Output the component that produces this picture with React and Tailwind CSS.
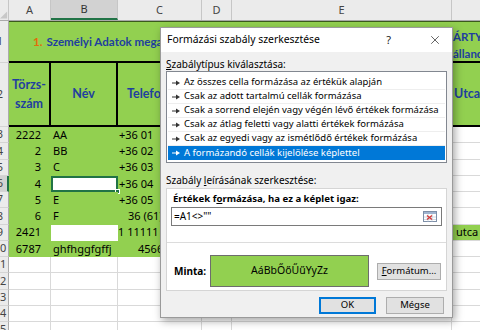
import React from "react";
import clsx from "clsx";
import { X } from "lucide-react";

const GREEN = "bg-[#92d050]";
const BLUE = "text-[#1f3f9f]";

const rows = [
  { n: 3, a: "2222", b: "AA", c: "+36 01", cl: "pl-[1px]" },
  { n: 4, a: "2", b: "BB", c: "+36 02", cl: "pl-[1px]" },
  { n: 5, a: "3", b: "C", c: "+36 03", cl: "pl-[1px]" },
  { n: 6, a: "4", b: "", c: "+36 04", cl: "pl-[1px]", sel: true },
  { n: 7, a: "5", b: "E", c: "+36 05", cl: "pl-[1px]" },
  { n: 8, a: "6", b: "F", c: "36 (61)", cl: "pl-[10px]" },
  { n: 9, a: "2421", b: "", c: "1 11111", cl: "pl-[0px]", blank: true, f: "utca" },
  { n: 10, a: "6787", b: "ghfhggfgffj", c: "4566", cl: "pl-[20px]" },
];

const rules = [
  "Az összes cella formázása az értékük alapján",
  "Csak az adott tartalmú cellák formázása",
  "Csak a sorrend elején vagy végén lévő értékek formázása",
  "Csak az átlag feletti vagy alatti értékek formázása",
  "Csak az egyedi vagy az ismétlődő értékek formázása",
  "A formázandó cellák kijelölése képlettel",
];

const RowHead = ({ n, sel }) => (
  <div
    className={clsx(
      "w-[9px] shrink-0 overflow-hidden flex items-center border-b border-[#d4d4d4]",
      sel ? "bg-[#d2d2d2] border-r-2 border-r-[#217346]" : "bg-[#ebebeb] border-r border-r-[#ababab]"
    )}
  >
    <div className="w-[18px] -ml-[9px] shrink-0 text-center text-[11px] text-[#444]">{n}</div>
  </div>
);

const ColHead = ({ w, sel, children }) => (
  <div
    className={clsx(
      w,
      "shrink-0 flex items-center justify-center border-r border-[#c6c6c6]",
      sel ? "bg-[#d2d2d2] border-b-2 border-b-[#217346] text-[#333]" : "text-[#444]"
    )}
  >
    {children}
  </div>
);

const Arrow = ({ white }) => (
  <svg width="8" height="6" viewBox="0 0 8 6" className="shrink-0">
    <path d="M0 3h5" stroke={white ? "#fff" : "#333"} strokeWidth="1" />
    <path d="M4 0.5L8 3L4 5.5z" fill={white ? "#fff" : "#333"} />
  </svg>
);

const Sheet = () => (
  <div className="flex flex-col text-[11px]">
    <div className="flex h-[21px] bg-[#ebebeb] border-b border-[#a9a9a9] text-[11px]">
      <div className="w-[9px] shrink-0 flex items-end border-r border-[#c6c6c6]">
        <svg width="9" height="10" viewBox="0 0 9 10">
          <path d="M8 1V9H0z" fill="#c8c8c8" />
        </svg>
      </div>
      <ColHead w="w-[42px]">A</ColHead>
      <ColHead w="w-[67px]" sel>B</ColHead>
      <ColHead w="w-[84px]">C</ColHead>
      <ColHead w="w-[30px]">D</ColHead>
      <ColHead w="w-[220px]">E</ColHead>
      <div className="flex-1" />
    </div>

    <div className="flex h-[42px]">
      <RowHead n={1} />
      <div className={clsx("flex flex-1 border-t border-[#3b5a1c] border-b-2 border-b-black font-['Lato',sans-serif] font-bold", GREEN)}>
        <div className="w-[443px] shrink-0 flex items-center pl-[24px] text-[11.6px] whitespace-nowrap overflow-hidden">
          <span className="text-[#e46c0a]">1.</span>
          <span className={clsx("ml-[4px]", BLUE)}>Személyi Adatok megadása</span>
        </div>
        <div className={clsx("flex-1 flex flex-col justify-center pt-[7px] pl-[1px] text-[11.5px] leading-[17px] whitespace-nowrap overflow-hidden", BLUE)}>
          <span>ÁRTYA</span>
          <span>állandó</span>
        </div>
      </div>
    </div>

    <div className="flex h-[64px]">
      <RowHead n={2} />
      <div className={clsx("flex flex-1 border-b-2 border-black font-['Lato',sans-serif] font-bold text-[12.5px]", GREEN, BLUE)}>
        <div className="w-[42px] shrink-0 flex flex-col items-center justify-center leading-[19px] border-r-2 border-black">
          <span>Törzs-</span>
          <span>szám</span>
        </div>
        <div className="w-[67px] shrink-0 flex items-center justify-center border-r-2 border-black">Név</div>
        <div className="w-[84px] shrink-0 flex items-center pl-[9px] border-r-2 border-black">Telefonszám</div>
        <div className="w-[30px] shrink-0" />
        <div className="w-[220px] shrink-0 border-r-2 border-black" />
        <div className="flex-1 flex items-center pl-[2px]">Utca</div>
      </div>
    </div>

    {rows.map((r) => (
      <div key={r.n} className="flex h-[16.25px] text-[11px]">
        <RowHead n={r.n} sel={r.sel} />
        <div className={clsx("w-[42px] shrink-0 flex items-center justify-end pr-[10px]", GREEN)}>{r.a}</div>
        <div
          className={clsx(
            "w-[67px] shrink-0 flex items-center pl-[2px] relative",
            r.sel ? "bg-white border-2 border-[#217346]" : r.blank ? "bg-white" : GREEN
          )}
        >
          {r.b}
          {r.sel && (
            <div className="absolute -right-[4px] -bottom-[4px] w-[5px] h-[5px] bg-[#217346] border border-white" />
          )}
        </div>
        <div className={clsx("w-[84px] shrink-0 flex items-center whitespace-nowrap", r.cl, GREEN)}>{r.c}</div>
        <div className={clsx("w-[250px] shrink-0", GREEN)} />
        <div
          className={clsx(
            "flex-1 flex items-center pl-[3px] border-b border-l border-[#d9d9d9]",
            r.f ? GREEN : "bg-white"
          )}
        >
          {r.f}
        </div>
      </div>
    ))}

    {[11, 12, 13, 14, 15].map((n) => (
      <div key={n} className="flex h-[16.25px]">
        <RowHead n={n} />
        <div className="w-[42px] shrink-0 border-r border-b border-[#d9d9d9]" />
        <div className="w-[67px] shrink-0 border-r border-b border-[#d9d9d9]" />
        <div className="w-[84px] shrink-0 border-r border-b border-[#d9d9d9]" />
        <div className="w-[30px] shrink-0 border-r border-b border-[#d9d9d9]" />
        <div className="w-[220px] shrink-0 border-r border-b border-[#d9d9d9]" />
        <div className="flex-1 border-b border-[#d9d9d9]" />
      </div>
    ))}
  </div>
);

const Button = ({ w, def, children }) => (
  <div
    className={clsx(
      w,
      "h-[17px] flex items-center justify-center bg-[#e1e1e1] text-[9.5px]",
      def ? "border-2 border-[#0078d7]" : "border border-[#adadad]"
    )}
  >
    {children}
  </div>
);

const Dialog = () => (
  <div className="absolute left-[160px] top-[27px] w-[293px] h-[291px] flex flex-col bg-[#f0f0f0] border border-[#9a9a9a] shadow-[2px_3px_8px_rgba(0,0,0,0.35)] text-[10px] text-black font-['Noto_Sans',sans-serif]">
    <div className="h-[24px] shrink-0 flex items-center bg-white pl-[6px]">
      <span className="text-[10.4px]">Formázási szabály szerkesztése</span>
      <span className="ml-auto text-[11px] text-[#222]">?</span>
      <X size={14} strokeWidth={1.2} className="ml-[37px] mr-[10px] text-[#222]" />
    </div>

    <div className="flex flex-col px-[5px]">
      <div className="mt-[5px] leading-[14px]">
        <span className="underline">S</span>zabálytípus kiválasztása:
      </div>
      <div className="h-[92px] bg-white border border-[#828790] pt-[4px] px-[1px] text-[9.5px]">
        {rules.map((t, i) => (
          <div
            key={t}
            className={clsx(
              "h-[14px] flex items-center gap-[4px] pl-[4px] whitespace-nowrap",
              i === 5 ? "bg-[#0078d7] text-white" : "border-b border-[#eeeeee]"
            )}
          >
            <Arrow white={i === 5} />
            <span>{t}</span>
          </div>
        ))}
      </div>

      <div className="mt-[10px] leading-[14px]">
        Szabály <span className="underline">l</span>eírásának szerkesztése:
      </div>
      <div className="mt-[1px] h-[103px] flex flex-col bg-white border border-[#d5d5d5]">
        <div className="pt-[3px] pl-[6px] leading-[14px] font-bold text-[9.6px]">
          Értékek f<span className="underline">o</span>rmázása, ha ez a képlet igaz:
        </div>
        <div className="mt-[1px] mx-[4px] h-[19px] flex items-center border border-[#7a7a7a] pl-[2px] pr-[4px]">
          <span>=A1&lt;&gt;""</span>
          <svg width="14" height="11" viewBox="0 0 14 11" className="ml-auto">
            <rect x="0.5" y="0.5" width="13" height="10" fill="#fff" stroke="#7d8fa8" />
            <rect x="1" y="1" width="12" height="2" fill="#9fb4d0" />
            <path d="M1 6h12M1 8.5h12M5 3v7.5M9 3v7.5" stroke="#c7cfda" strokeWidth="0.8" />
            <path d="M4 4.5l5 4M9 4.5l-5 4" stroke="#d23a3a" strokeWidth="1.4" />
          </svg>
        </div>
        <div className="mt-[16px] border-t border-[#dcdcdc]" />
        <div className="mt-[12px] flex items-center">
          <div className="w-[43px] pl-[7px] font-bold">Minta:</div>
          <div className={clsx("w-[159px] h-[32px] flex items-center justify-center border border-[#6d6d6d] text-[10.5px]", GREEN)}>
            AáBbŐőŰűYyZz
          </div>
          <div className="ml-[8px]">
            <Button w="w-[64px]">
              <span className="underline">F</span>ormátum...
            </Button>
          </div>
        </div>
      </div>

      <div className="mt-[6px] flex justify-end gap-[10px] pr-[3px]">
        <Button w="w-[57px]" def>OK</Button>
        <Button w="w-[58px]">Mégse</Button>
      </div>
    </div>
  </div>
);

export default function App() {
  return (
    <div className="relative w-[480px] h-[330px] overflow-hidden bg-white font-['Noto_Sans',sans-serif] text-black">
      <Sheet />
      <Dialog />
    </div>
  );
}
